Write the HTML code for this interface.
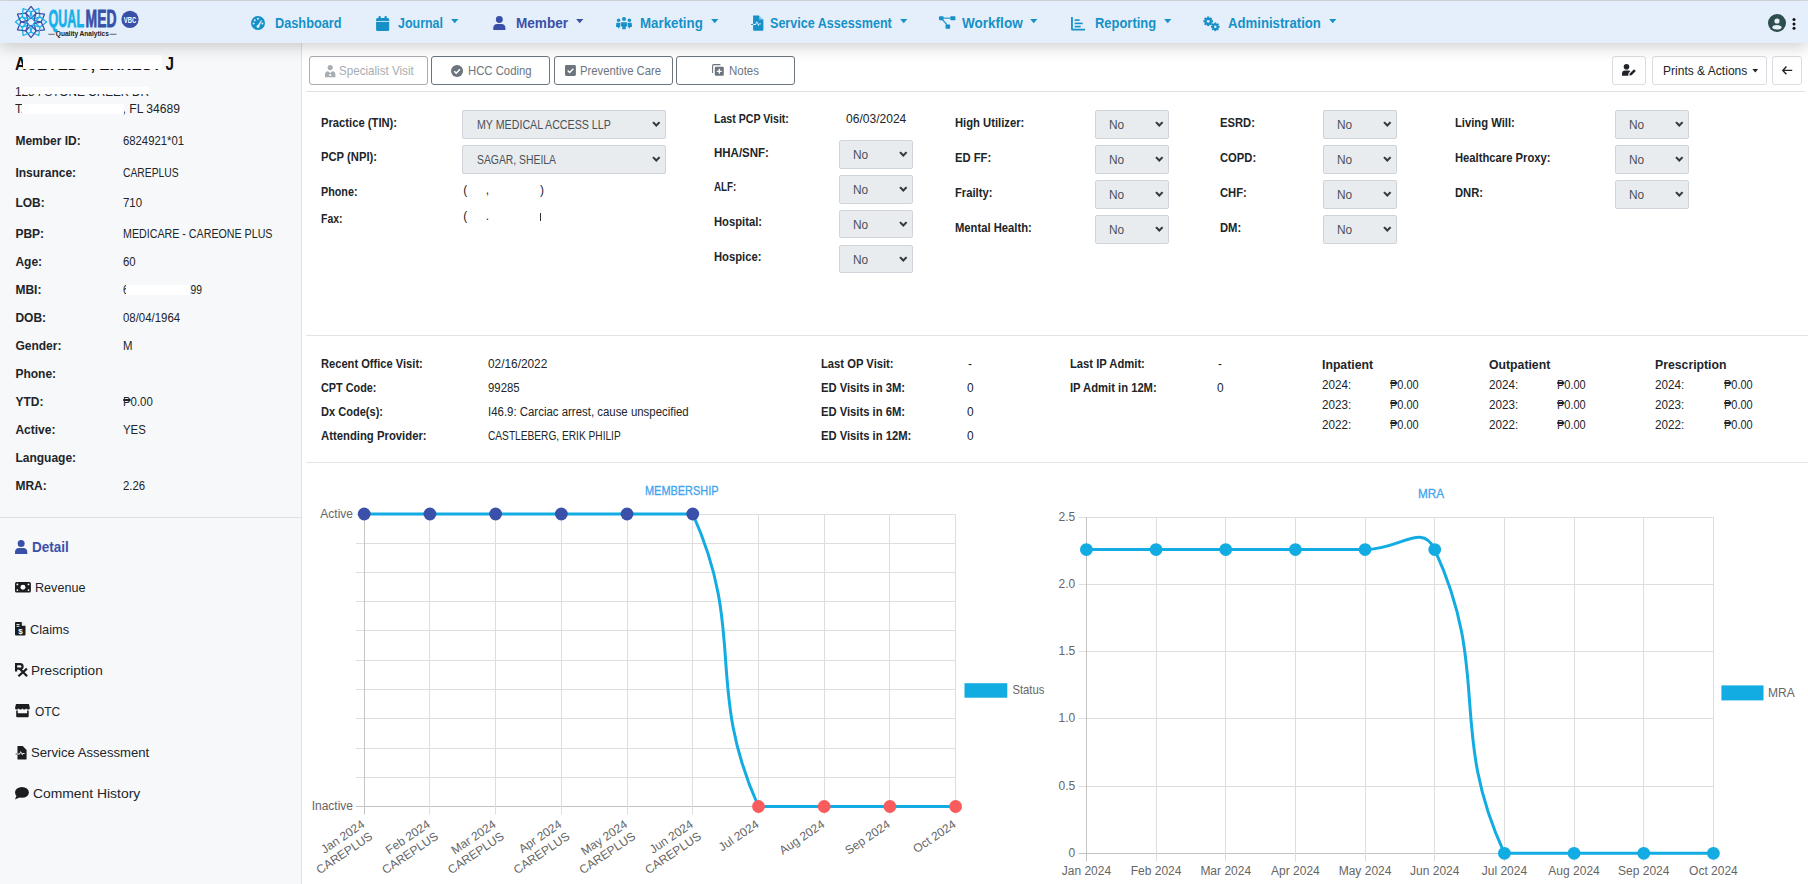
<!DOCTYPE html>
<html><head><meta charset="utf-8"><title>QualMed</title>
<style>
html,body{margin:0;padding:0;}
body{width:1808px;height:884px;overflow:hidden;position:relative;background:#fff;font-family:"Liberation Sans",sans-serif;}
.t{position:absolute;white-space:nowrap;transform-origin:0 0;}
svg{overflow:visible;}
</style></head><body>
<div style="position:absolute;left:0.00px;top:0.00px;width:1808.00px;height:1.00px;background:#d9dde2"></div>
<div style="position:absolute;left:0.00px;top:1.00px;width:1808.00px;height:42.00px;background:#e5effb;box-shadow:0 4px 16px rgba(0,0,0,0.19);z-index:5"></div>
<svg style="position:absolute;left:14.50px;top:5.70px;z-index:6" width="32.00" height="32.00" viewBox="0 0 32 32"><path transform="rotate(0 16 16)" d="M16 12.6 L21.2 7.2 L16 0.4 L10.8 7.2 Z" fill="none" stroke="#3a50a8" stroke-width="1.3" stroke-linejoin="round"/><path transform="rotate(30 16 16)" d="M16 12.6 L21.2 7.2 L16 0.4 L10.8 7.2 Z" fill="none" stroke="#1ab3ea" stroke-width="1.3" stroke-linejoin="round"/><path transform="rotate(60 16 16)" d="M16 12.6 L21.2 7.2 L16 0.4 L10.8 7.2 Z" fill="none" stroke="#3a50a8" stroke-width="1.3" stroke-linejoin="round"/><path transform="rotate(90 16 16)" d="M16 12.6 L21.2 7.2 L16 0.4 L10.8 7.2 Z" fill="none" stroke="#1ab3ea" stroke-width="1.3" stroke-linejoin="round"/><path transform="rotate(120 16 16)" d="M16 12.6 L21.2 7.2 L16 0.4 L10.8 7.2 Z" fill="none" stroke="#3a50a8" stroke-width="1.3" stroke-linejoin="round"/><path transform="rotate(150 16 16)" d="M16 12.6 L21.2 7.2 L16 0.4 L10.8 7.2 Z" fill="none" stroke="#1ab3ea" stroke-width="1.3" stroke-linejoin="round"/><path transform="rotate(180 16 16)" d="M16 12.6 L21.2 7.2 L16 0.4 L10.8 7.2 Z" fill="none" stroke="#3a50a8" stroke-width="1.3" stroke-linejoin="round"/><path transform="rotate(210 16 16)" d="M16 12.6 L21.2 7.2 L16 0.4 L10.8 7.2 Z" fill="none" stroke="#1ab3ea" stroke-width="1.3" stroke-linejoin="round"/><path transform="rotate(240 16 16)" d="M16 12.6 L21.2 7.2 L16 0.4 L10.8 7.2 Z" fill="none" stroke="#3a50a8" stroke-width="1.3" stroke-linejoin="round"/><path transform="rotate(270 16 16)" d="M16 12.6 L21.2 7.2 L16 0.4 L10.8 7.2 Z" fill="none" stroke="#1ab3ea" stroke-width="1.3" stroke-linejoin="round"/><path transform="rotate(300 16 16)" d="M16 12.6 L21.2 7.2 L16 0.4 L10.8 7.2 Z" fill="none" stroke="#3a50a8" stroke-width="1.3" stroke-linejoin="round"/><path transform="rotate(330 16 16)" d="M16 12.6 L21.2 7.2 L16 0.4 L10.8 7.2 Z" fill="none" stroke="#1ab3ea" stroke-width="1.3" stroke-linejoin="round"/></svg>
<svg style="position:absolute;left:0;top:0;z-index:6" width="160" height="43" viewBox="0 0 160 43"><text x="48.4" y="27.3" font-family="Liberation Sans" font-weight="bold" font-size="23.2" textLength="35.7" lengthAdjust="spacingAndGlyphs" fill="#19b1ea" stroke="#19b1ea" stroke-width="0.8">QUAL</text><text x="85.6" y="27.3" font-family="Liberation Sans" font-weight="bold" font-size="23.2" textLength="30.9" lengthAdjust="spacingAndGlyphs" fill="#3a50a8" stroke="#3a50a8" stroke-width="0.8">MED</text><circle cx="130" cy="19.4" r="8.6" fill="#3a50a8"/><text x="123.8" y="22.8" font-family="Liberation Sans" font-weight="bold" font-size="9.6" textLength="12.5" lengthAdjust="spacingAndGlyphs" fill="#fff">VBC</text><rect x="48.3" y="33.8" width="6.3" height="0.9" fill="#555"/><rect x="109.8" y="33.8" width="6.7" height="0.9" fill="#555"/><text x="55.8" y="35.9" font-family="Liberation Sans" font-weight="bold" font-size="6.6" textLength="53" lengthAdjust="spacingAndGlyphs" fill="#1a1a1a">Quality Analytics</text></svg>
<div class="t" style="left:274.50px;top:16.15px;font-size:14px;line-height:14px;color:#1591c8;font-weight:bold;transform:scaleX(0.9094);z-index:6;">Dashboard</div>
<div class="t" style="left:398.00px;top:16.15px;font-size:14px;line-height:14px;color:#1591c8;font-weight:bold;transform:scaleX(0.8899);z-index:6;">Journal</div>
<svg style="position:absolute;left:451.00px;top:19.30px;z-index:6" width="7.50" height="4.50" viewBox="0 0 8 5"><path d="M0 0H8L4 4.8Z" fill="#1591c8"/></svg>
<div class="t" style="left:515.70px;top:16.15px;font-size:14px;line-height:14px;color:#3a50a8;font-weight:bold;transform:scaleX(0.9705);z-index:6;">Member</div>
<svg style="position:absolute;left:575.70px;top:19.30px;z-index:6" width="7.50" height="4.50" viewBox="0 0 8 5"><path d="M0 0H8L4 4.8Z" fill="#3a50a8"/></svg>
<div class="t" style="left:640.40px;top:16.15px;font-size:14px;line-height:14px;color:#1591c8;font-weight:bold;transform:scaleX(0.9497);z-index:6;">Marketing</div>
<svg style="position:absolute;left:711.30px;top:19.30px;z-index:6" width="7.50" height="4.50" viewBox="0 0 8 5"><path d="M0 0H8L4 4.8Z" fill="#1591c8"/></svg>
<div class="t" style="left:770.40px;top:16.15px;font-size:14px;line-height:14px;color:#1591c8;font-weight:bold;transform:scaleX(0.8977);z-index:6;">Service Assessment</div>
<svg style="position:absolute;left:900.20px;top:19.30px;z-index:6" width="7.50" height="4.50" viewBox="0 0 8 5"><path d="M0 0H8L4 4.8Z" fill="#1591c8"/></svg>
<div class="t" style="left:962.10px;top:16.15px;font-size:14px;line-height:14px;color:#1591c8;font-weight:bold;transform:scaleX(0.9674);z-index:6;">Workflow</div>
<svg style="position:absolute;left:1030.30px;top:19.30px;z-index:6" width="7.50" height="4.50" viewBox="0 0 8 5"><path d="M0 0H8L4 4.8Z" fill="#1591c8"/></svg>
<div class="t" style="left:1094.50px;top:16.15px;font-size:14px;line-height:14px;color:#1591c8;font-weight:bold;transform:scaleX(0.9243);z-index:6;">Reporting</div>
<svg style="position:absolute;left:1164.40px;top:19.30px;z-index:6" width="7.50" height="4.50" viewBox="0 0 8 5"><path d="M0 0H8L4 4.8Z" fill="#1591c8"/></svg>
<div class="t" style="left:1228.10px;top:16.15px;font-size:14px;line-height:14px;color:#1591c8;font-weight:bold;transform:scaleX(0.9404);z-index:6;">Administration</div>
<svg style="position:absolute;left:1329.40px;top:19.30px;z-index:6" width="7.50" height="4.50" viewBox="0 0 8 5"><path d="M0 0H8L4 4.8Z" fill="#1591c8"/></svg>
<svg style="position:absolute;left:251.30px;top:16.00px;z-index:6" width="14.00" height="14.00" viewBox="0 0 16 16"><circle cx="8" cy="8" r="8" fill="#1591c8"/><circle cx="8" cy="3.2" r="1.1" fill="#e6f0fb"/><circle cx="4.3" cy="4.9" r="1.1" fill="#e6f0fb"/><circle cx="3" cy="8.6" r="1.1" fill="#e6f0fb"/><circle cx="13" cy="8.6" r="1.1" fill="#e6f0fb"/><path d="M7 11.8 L11.6 4.6 L12.4 5.2 L9.2 12.6 Z" fill="#e6f0fb"/><circle cx="8" cy="12" r="1.6" fill="#e6f0fb"/></svg>
<svg style="position:absolute;left:375.70px;top:15.50px;z-index:6" width="13.30" height="15.00" viewBox="0 0 14 16"><rect x="0" y="2.2" width="14" height="13.8" rx="1.6" fill="#1591c8"/><rect x="2.6" y="0" width="2.4" height="4" rx="1" fill="#1591c8"/><rect x="9" y="0" width="2.4" height="4" rx="1" fill="#1591c8"/><rect x="0" y="5.3" width="14" height="0.9" fill="#e6f0fb"/></svg>
<svg style="position:absolute;left:493.00px;top:15.80px;z-index:6" width="12.70" height="13.90" viewBox="0 0 14 16"><circle cx="7" cy="4" r="4" fill="#3a50a8"/><path d="M0 16 V13.6 C0 10.8 2 9.2 4.4 9.2 H9.6 C12 9.2 14 10.8 14 13.6 V16 Z" fill="#3a50a8"/></svg>
<svg style="position:absolute;left:615.00px;top:16.50px;z-index:6" width="18.00" height="12.20" viewBox="0 0 20 14"><circle cx="10" cy="2.3" r="2.3" fill="#1591c8"/><circle cx="3.8" cy="3.6" r="2" fill="#1591c8"/><circle cx="16.2" cy="3.6" r="2" fill="#1591c8"/><path d="M6.8 6 H13.2 L13.6 10.5 L12 11 V14 H8 V11 L6.4 10.5 Z" fill="#1591c8"/><path d="M1.2 6.6 H6 L5.6 11.5 H4.6 V13 H3 V11.5 H0.8 Z" fill="#1591c8"/><path d="M14 6.6 H18.8 L19.2 11.5 H17 V13 H15.4 V11.5 H14.4 Z" fill="#1591c8"/></svg>
<svg style="position:absolute;left:751.00px;top:14.50px;z-index:6" width="12.40" height="16.00" viewBox="0 0 13 16"><path d="M2.2 0 H8.4 L13 4.6 V15 Q13 16 12 16 H3.2 Q2.2 16 2.2 15 V10 H5 L6.2 7.8 L7.8 11.4 L8.8 9.4 H10.6 V8.4 H8.2 L7.8 9.2 L6.2 5.8 L4.4 9 H2.2 Z" fill="#1591c8"/><path d="M8.6 0 V4.4 H13 Z" fill="#e6f0fb" opacity="0.6"/><path d="M0 9 H2.2 V10 H0 Z" fill="#1591c8"/></svg>
<svg style="position:absolute;left:938.60px;top:16.30px;z-index:6" width="16.40" height="13.00" viewBox="0 0 18 14"><rect x="0" y="0" width="5" height="4.4" rx="0.8" fill="#1591c8"/><rect x="12.5" y="0" width="5.5" height="4.4" rx="0.8" fill="#1591c8"/><rect x="7.2" y="9.2" width="5" height="4.8" rx="0.8" fill="#1591c8"/><path d="M4 1.6 H13 V2.8 H4 Z" fill="#1591c8"/><path d="M2.8 3.8 L8.4 10 L9.4 9.2 L3.8 3 Z" fill="#1591c8"/></svg>
<svg style="position:absolute;left:1071.00px;top:16.50px;z-index:6" width="14.10" height="13.50" viewBox="0 0 14 13.5"><path d="M0 0 H1.8 V11.7 H14 V13.5 H1.5 Q0 13.5 0 12 Z" fill="#1591c8"/><rect x="3.6" y="2.3" width="5" height="1.6" fill="#1591c8"/><rect x="3.6" y="5.6" width="8" height="1.6" fill="#1591c8"/><rect x="3.6" y="8.8" width="6" height="1.6" fill="#1591c8"/></svg>
<svg style="position:absolute;left:1203.40px;top:15.50px;z-index:6" width="17.30" height="15.00" viewBox="0 0 17.3 15"><rect x="4.10" y="0.50" width="2.20" height="2.40" fill="#1591c8" transform="rotate(0.0 5.2 5.3)"/><rect x="4.10" y="0.50" width="2.20" height="2.40" fill="#1591c8" transform="rotate(45.0 5.2 5.3)"/><rect x="4.10" y="0.50" width="2.20" height="2.40" fill="#1591c8" transform="rotate(90.0 5.2 5.3)"/><rect x="4.10" y="0.50" width="2.20" height="2.40" fill="#1591c8" transform="rotate(135.0 5.2 5.3)"/><rect x="4.10" y="0.50" width="2.20" height="2.40" fill="#1591c8" transform="rotate(180.0 5.2 5.3)"/><rect x="4.10" y="0.50" width="2.20" height="2.40" fill="#1591c8" transform="rotate(225.0 5.2 5.3)"/><rect x="4.10" y="0.50" width="2.20" height="2.40" fill="#1591c8" transform="rotate(270.0 5.2 5.3)"/><rect x="4.10" y="0.50" width="2.20" height="2.40" fill="#1591c8" transform="rotate(315.0 5.2 5.3)"/><circle cx="5.2" cy="5.3" r="3.6" fill="#1591c8"/><circle cx="5.2" cy="5.3" r="1.4" fill="#e6f0fb"/><rect x="11.30" y="6.50" width="2.00" height="2.40" fill="#1591c8" transform="rotate(0.0 12.3 10.8)"/><rect x="11.30" y="6.50" width="2.00" height="2.40" fill="#1591c8" transform="rotate(45.0 12.3 10.8)"/><rect x="11.30" y="6.50" width="2.00" height="2.40" fill="#1591c8" transform="rotate(90.0 12.3 10.8)"/><rect x="11.30" y="6.50" width="2.00" height="2.40" fill="#1591c8" transform="rotate(135.0 12.3 10.8)"/><rect x="11.30" y="6.50" width="2.00" height="2.40" fill="#1591c8" transform="rotate(180.0 12.3 10.8)"/><rect x="11.30" y="6.50" width="2.00" height="2.40" fill="#1591c8" transform="rotate(225.0 12.3 10.8)"/><rect x="11.30" y="6.50" width="2.00" height="2.40" fill="#1591c8" transform="rotate(270.0 12.3 10.8)"/><rect x="11.30" y="6.50" width="2.00" height="2.40" fill="#1591c8" transform="rotate(315.0 12.3 10.8)"/><circle cx="12.3" cy="10.8" r="3.1" fill="#1591c8"/><circle cx="12.3" cy="10.8" r="1.2" fill="#e6f0fb"/></svg>
<svg style="position:absolute;left:1768.00px;top:14.00px;z-index:6" width="18.00" height="18.00" viewBox="0 0 18 18"><circle cx="9" cy="9" r="9" fill="#2e4d4f"/><circle cx="9" cy="7" r="2.6" fill="#e6f0fb"/><ellipse cx="9" cy="13.3" rx="4.6" ry="2.2" fill="#e6f0fb"/></svg>
<svg style="position:absolute;left:1792.00px;top:18.00px;z-index:6" width="4.00" height="12.00" viewBox="0 0 4 12"><circle cx="2" cy="1.6" r="1.5" fill="#111"/><circle cx="2" cy="5.9" r="1.5" fill="#111"/><circle cx="2" cy="10.2" r="1.5" fill="#111"/></svg>
<div style="position:absolute;left:0.00px;top:43.00px;width:301.00px;height:841.00px;background:#f7f8fa;border-right:1px solid #dee2e6"></div>
<div class="t" style="left:15.00px;top:54.76px;font-size:18px;line-height:18px;color:#111;font-weight:bold;transform:scaleX(0.8501);">ACEVEDO, ERNEST J</div>
<div style="position:absolute;left:22.60px;top:55.00px;width:139.40px;height:13.80px;background:#fff"></div>
<div class="t" style="left:15.00px;top:85.84px;font-size:12px;line-height:12px;color:#212529;transform:scaleX(0.9817);">1234 STONE CREEK DR</div>
<div style="position:absolute;left:21.00px;top:86.60px;width:128.00px;height:7.70px;background:#fff"></div>
<div class="t" style="left:15.00px;top:103.02px;font-size:12.5px;line-height:12.5px;color:#212529;transform:scaleX(0.9694);">TARPON SPRINGS, FL 34689</div>
<div style="position:absolute;left:22.00px;top:104.40px;width:101.50px;height:9.20px;background:#fff"></div>
<div class="t" style="left:15.40px;top:135.34px;font-size:12px;line-height:12px;color:#212529;font-weight:bold;">Member ID:</div>
<div class="t" style="left:122.50px;top:135.34px;font-size:12px;line-height:12px;color:#212529;transform:scaleX(0.9423);">6824921*01</div>
<div class="t" style="left:15.40px;top:166.54px;font-size:12px;line-height:12px;color:#212529;font-weight:bold;">Insurance:</div>
<div class="t" style="left:122.50px;top:166.54px;font-size:12px;line-height:12px;color:#212529;transform:scaleX(0.8600);">CAREPLUS</div>
<div class="t" style="left:15.40px;top:197.34px;font-size:12px;line-height:12px;color:#212529;font-weight:bold;">LOB:</div>
<div class="t" style="left:122.50px;top:197.34px;font-size:12px;line-height:12px;color:#212529;transform:scaleX(0.9500);">710</div>
<div class="t" style="left:15.40px;top:228.04px;font-size:12px;line-height:12px;color:#212529;font-weight:bold;">PBP:</div>
<div class="t" style="left:122.50px;top:228.04px;font-size:12px;line-height:12px;color:#212529;transform:scaleX(0.8897);">MEDICARE - CAREONE PLUS</div>
<div class="t" style="left:15.40px;top:255.94px;font-size:12px;line-height:12px;color:#212529;font-weight:bold;">Age:</div>
<div class="t" style="left:122.50px;top:255.94px;font-size:12px;line-height:12px;color:#212529;transform:scaleX(0.9500);">60</div>
<div class="t" style="left:15.40px;top:283.84px;font-size:12px;line-height:12px;color:#212529;font-weight:bold;">MBI:</div>
<div class="t" style="left:122.50px;top:283.84px;font-size:12px;line-height:12px;color:#212529;transform:scaleX(0.8582);">6XXXXXXXXX99</div>
<div class="t" style="left:15.40px;top:311.84px;font-size:12px;line-height:12px;color:#212529;font-weight:bold;">DOB:</div>
<div class="t" style="left:122.50px;top:311.84px;font-size:12px;line-height:12px;color:#212529;transform:scaleX(0.9500);">08/04/1964</div>
<div class="t" style="left:15.40px;top:339.84px;font-size:12px;line-height:12px;color:#212529;font-weight:bold;">Gender:</div>
<div class="t" style="left:122.50px;top:339.84px;font-size:12px;line-height:12px;color:#212529;transform:scaleX(0.9500);">M</div>
<div class="t" style="left:15.40px;top:367.84px;font-size:12px;line-height:12px;color:#212529;font-weight:bold;">Phone:</div>
<div class="t" style="left:15.40px;top:395.84px;font-size:12px;line-height:12px;color:#212529;font-weight:bold;">YTD:</div>
<div class="t" style="left:122.50px;top:395.84px;font-size:12px;line-height:12px;color:#212529;transform:scaleX(0.9500);">₱0.00</div>
<div class="t" style="left:15.40px;top:423.84px;font-size:12px;line-height:12px;color:#212529;font-weight:bold;">Active:</div>
<div class="t" style="left:122.50px;top:423.84px;font-size:12px;line-height:12px;color:#212529;transform:scaleX(0.9500);">YES</div>
<div class="t" style="left:15.40px;top:451.84px;font-size:12px;line-height:12px;color:#212529;font-weight:bold;">Language:</div>
<div class="t" style="left:15.40px;top:479.94px;font-size:12px;line-height:12px;color:#212529;font-weight:bold;">MRA:</div>
<div class="t" style="left:122.50px;top:479.94px;font-size:12px;line-height:12px;color:#212529;transform:scaleX(0.9500);">2.26</div>
<div style="position:absolute;left:125.60px;top:284.50px;width:64.00px;height:10.20px;background:#fff"></div>
<div style="position:absolute;left:0.00px;top:517.00px;width:301.00px;height:1.00px;background:#dee2e6"></div>
<svg style="position:absolute;left:15.00px;top:539.70px;" width="12.30" height="14.00" viewBox="0 0 14 16"><circle cx="7" cy="4" r="4" fill="#3a50a8"/><path d="M0 16 V13.6 C0 10.8 2 9.2 4.4 9.2 H9.6 C12 9.2 14 10.8 14 13.6 V16 Z" fill="#3a50a8"/></svg>
<div class="t" style="left:31.70px;top:540.15px;font-size:14px;line-height:14px;color:#3a50a8;font-weight:bold;transform:scaleX(0.9652);">Detail</div>
<svg style="position:absolute;left:15.00px;top:582.30px;" width="15.90" height="10.50" viewBox="0 0 16 10.5"><rect x="0" y="0" width="16" height="10.5" rx="1.6" fill="#1b1e21"/><circle cx="8" cy="5.25" r="2.5" fill="#fff"/><circle cx="2.4" cy="2.4" r="0.9" fill="#fff"/><circle cx="13.6" cy="2.4" r="0.9" fill="#fff"/><circle cx="2.4" cy="8.1" r="0.9" fill="#fff"/><circle cx="13.6" cy="8.1" r="0.9" fill="#fff"/></svg>
<div class="t" style="left:35.20px;top:581.37px;font-size:13.5px;line-height:13.5px;color:#212529;transform:scaleX(0.9326);">Revenue</div>
<svg style="position:absolute;left:15.00px;top:621.90px;" width="10.50" height="13.50" viewBox="0 0 10.5 13.5"><path d="M0 1 Q0 0 1 0 H6.6 L10.5 3.9 V12.5 Q10.5 13.5 9.5 13.5 H1 Q0 13.5 0 12.5 Z" fill="#1b1e21"/><path d="M6.8 0 V3.7 H10.5" fill="#f7f8fa"/><text x="5.4" y="11.6" font-family="Liberation Sans" font-weight="bold" font-size="8" fill="#fff" text-anchor="middle">$</text><rect x="1.5" y="2" width="3" height="0.9" fill="#fff"/><rect x="1.5" y="3.8" width="3" height="0.9" fill="#fff"/></svg>
<div class="t" style="left:29.50px;top:622.67px;font-size:13.5px;line-height:13.5px;color:#212529;transform:scaleX(0.9478);">Claims</div>
<svg style="position:absolute;left:14.80px;top:662.80px;" width="12.50" height="13.50" viewBox="0 0 12.5 13.5"><path d="M1.1 8.6 V1.1 H4.9 Q7.6 1.1 7.6 3.4 Q7.6 5.7 4.9 5.7 H1.1 M5 5.9 L12.1 13.2 M3.4 13.2 L11.9 5.6" fill="none" stroke="#1b1e21" stroke-width="2.2"/></svg>
<div class="t" style="left:31.20px;top:664.07px;font-size:13.5px;line-height:13.5px;color:#212529;transform:scaleX(1.0059);">Prescription</div>
<svg style="position:absolute;left:15.00px;top:704.40px;" width="14.90" height="13.20" viewBox="0 0 15 13.2"><path d="M1 0 H14 L15 4 Q15 5.6 13.2 5.6 Q11.3 5.6 11.2 4.2 Q11 5.6 9.4 5.6 Q7.6 5.6 7.5 4.2 Q7.4 5.6 5.6 5.6 Q3.9 5.6 3.8 4.2 Q3.6 5.6 1.8 5.6 Q0 5.6 0 4 Z" fill="#1b1e21"/><path d="M1.2 6.6 H2.8 V9.2 H12.2 V6.6 H13.8 V12.2 Q13.8 13.2 12.8 13.2 H2.2 Q1.2 13.2 1.2 12.2 Z" fill="#1b1e21"/></svg>
<div class="t" style="left:34.60px;top:704.87px;font-size:13.5px;line-height:13.5px;color:#212529;transform:scaleX(0.8843);">OTC</div>
<svg style="position:absolute;left:15.00px;top:745.50px;" width="12.20" height="13.50" viewBox="0 0 13 16"><path d="M2.2 0 H8.4 L13 4.6 V15 Q13 16 12 16 H3.2 Q2.2 16 2.2 15 V10 H5 L6.2 7.8 L7.8 11.4 L8.8 9.4 H10.6 V8.4 H8.2 L7.8 9.2 L6.2 5.8 L4.4 9 H2.2 Z" fill="#1b1e21"/><path d="M0 9 H2.2 V10 H0 Z" fill="#1b1e21"/></svg>
<div class="t" style="left:31.20px;top:746.27px;font-size:13.5px;line-height:13.5px;color:#212529;transform:scaleX(0.9725);">Service Assessment</div>
<svg style="position:absolute;left:15.00px;top:786.50px;" width="13.90" height="12.50" viewBox="0 0 14 12.5"><ellipse cx="7" cy="5.4" rx="7" ry="5.4" fill="#1b1e21"/><path d="M1.6 8.6 L0 12.5 L4.8 10.4 Z" fill="#1b1e21"/></svg>
<div class="t" style="left:33.00px;top:786.97px;font-size:13.5px;line-height:13.5px;color:#212529;transform:scaleX(1.0281);">Comment History</div>
<div style="position:absolute;left:309.00px;top:56.00px;width:119.00px;height:28.80px;box-sizing:border-box;border:1px solid #a7adb2;border-radius:3px;"></div>
<div style="position:absolute;left:431.00px;top:56.00px;width:119.00px;height:28.80px;box-sizing:border-box;border:1px solid #6c757d;border-radius:3px;"></div>
<div style="position:absolute;left:554.00px;top:56.00px;width:118.50px;height:28.80px;box-sizing:border-box;border:1px solid #6c757d;border-radius:3px;"></div>
<div style="position:absolute;left:676.00px;top:56.00px;width:119.00px;height:28.80px;box-sizing:border-box;border:1px solid #6c757d;border-radius:3px;"></div>
<svg style="position:absolute;left:324.80px;top:64.50px;" width="10.40" height="12.30" viewBox="0 0 10.4 12.3"><circle cx="5.2" cy="2.6" r="2.6" fill="#a7adb1"/><path d="M0 12.3 V9.6 Q0 6.4 3 6.2 L5.2 8 L7.4 6.2 Q10.4 6.4 10.4 9.6 V12.3 Z" fill="#a7adb1"/><circle cx="5.2" cy="10" r="1.1" fill="#fff"/></svg>
<div class="t" style="left:338.80px;top:63.90px;font-size:13px;line-height:13px;color:#a7adb1;transform:scaleX(0.8938);">Specialist Visit</div>
<svg style="position:absolute;left:451.30px;top:64.50px;" width="12.10" height="12.10" viewBox="0 0 12 12"><circle cx="6" cy="6" r="6" fill="#6c757d"/><path d="M3.2 6.2 L5.2 8.1 L8.9 4.3" fill="none" stroke="#fff" stroke-width="1.5"/></svg>
<div class="t" style="left:467.60px;top:63.90px;font-size:13px;line-height:13px;color:#6c757d;transform:scaleX(0.8715);">HCC Coding</div>
<svg style="position:absolute;left:565.20px;top:65.00px;" width="10.90" height="10.90" viewBox="0 0 11 11"><rect x="0" y="0" width="11" height="11" rx="1.4" fill="#6c757d"/><path d="M2.7 5.6 L4.7 7.5 L8.4 3.7" fill="none" stroke="#fff" stroke-width="1.4"/></svg>
<div class="t" style="left:580.40px;top:63.90px;font-size:13px;line-height:13px;color:#6c757d;transform:scaleX(0.8701);">Preventive Care</div>
<svg style="position:absolute;left:712.00px;top:64.30px;" width="12.00" height="12.00" viewBox="0 0 12 12"><path d="M0.6 9 V1.6 Q0.6 0.6 1.6 0.6 H8.4" fill="none" stroke="#6c757d" stroke-width="1.1"/><rect x="2.8" y="2.8" width="9" height="9" rx="1.2" fill="#6c757d"/><path d="M7.3 4.8 V9.8 M4.8 7.3 H9.8" stroke="#fff" stroke-width="1.3"/></svg>
<div class="t" style="left:729.00px;top:63.90px;font-size:13px;line-height:13px;color:#6c757d;transform:scaleX(0.8834);">Notes</div>
<div style="position:absolute;left:1612.30px;top:56.00px;width:33.40px;height:28.80px;box-sizing:border-box;border:1px solid #dadde1;border-radius:3px"></div>
<div style="position:absolute;left:1652.40px;top:56.00px;width:115.00px;height:28.80px;box-sizing:border-box;border:1px solid #dadde1;border-radius:3px"></div>
<div style="position:absolute;left:1772.40px;top:56.00px;width:29.20px;height:28.80px;box-sizing:border-box;border:1px solid #dadde1;border-radius:3px"></div>
<svg style="position:absolute;left:1621.90px;top:64.40px;" width="14.00" height="11.80" viewBox="0 0 14 11.8"><circle cx="4.5" cy="2.8" r="2.8" fill="#212529"/><path d="M0 11.8 V10 Q0 6.6 3 6.6 H6.5 Q7.8 6.6 8.4 7.2 L6.6 9 L6.2 11.8 Z" fill="#212529"/><path d="M7.4 11.6 L7.8 9.4 L12 5.2 L13.8 7 L9.6 11.2 Z" fill="#212529"/></svg>
<div class="t" style="left:1662.70px;top:63.90px;font-size:13px;line-height:13px;color:#212529;transform:scaleX(0.9260);">Prints &amp; Actions</div>
<svg style="position:absolute;left:1752.00px;top:68.80px;" width="6.50" height="3.60" viewBox="0 0 8 5"><path d="M0 0H8L4 4.8Z" fill="#212529"/></svg>
<svg style="position:absolute;left:1781.80px;top:66.00px;" width="10.50" height="8.80" viewBox="0 0 10.5 8.8"><path d="M4.4 0.6 L0.8 4.4 L4.4 8.2 M0.8 4.4 H10.2" fill="none" stroke="#212529" stroke-width="1.4"/></svg>
<div style="position:absolute;left:306.00px;top:91.00px;width:1499.00px;height:1.00px;background:#dee2e6"></div>
<div class="t" style="left:321.40px;top:116.72px;font-size:12.5px;line-height:12.5px;color:#212529;font-weight:bold;transform:scaleX(0.8980);">Practice (TIN):</div>
<div class="t" style="left:321.40px;top:151.22px;font-size:12.5px;line-height:12.5px;color:#212529;font-weight:bold;transform:scaleX(0.8992);">PCP (NPI):</div>
<div class="t" style="left:321.40px;top:185.72px;font-size:12.5px;line-height:12.5px;color:#212529;font-weight:bold;transform:scaleX(0.8617);">Phone:</div>
<div class="t" style="left:321.40px;top:213.02px;font-size:12.5px;line-height:12.5px;color:#212529;font-weight:bold;transform:scaleX(0.8365);">Fax:</div>
<div style="position:absolute;left:462.00px;top:110.30px;width:204.00px;height:28.40px;box-sizing:border-box;background:#e9ecef;border:1px solid #ced4da;border-radius:2px"></div>
<div class="t" style="left:477.00px;top:118.92px;font-size:12.5px;line-height:12.5px;color:#495057;transform:scaleX(0.8522);">MY MEDICAL ACCESS LLP</div>
<svg style="position:absolute;left:652.00px;top:121.10px;" width="8.60" height="6.40" viewBox="0 0 8.6 6.4"><path d="M1 1.1 L4.3 4.6 L7.6 1.1" fill="none" stroke="#343a40" stroke-width="2.1"/></svg>
<div style="position:absolute;left:462.00px;top:145.20px;width:204.00px;height:28.40px;box-sizing:border-box;background:#e9ecef;border:1px solid #ced4da;border-radius:2px"></div>
<div class="t" style="left:477.00px;top:153.82px;font-size:12.5px;line-height:12.5px;color:#495057;transform:scaleX(0.8301);">SAGAR, SHEILA</div>
<svg style="position:absolute;left:652.00px;top:156.00px;" width="8.60" height="6.40" viewBox="0 0 8.6 6.4"><path d="M1 1.1 L4.3 4.6 L7.6 1.1" fill="none" stroke="#343a40" stroke-width="2.1"/></svg>
<div class="t" style="left:463.30px;top:183.84px;font-size:12px;line-height:12px;color:#212529;">(</div>
<div class="t" style="left:485.80px;top:183.84px;font-size:12px;line-height:12px;color:#212529;">,</div>
<div class="t" style="left:540.00px;top:183.84px;font-size:12px;line-height:12px;color:#212529;">)</div>
<div class="t" style="left:463.30px;top:210.44px;font-size:12px;line-height:12px;color:#212529;">(</div>
<div class="t" style="left:485.80px;top:210.44px;font-size:12px;line-height:12px;color:#212529;">.</div>
<div style="position:absolute;left:540.20px;top:212.50px;width:1.10px;height:8.20px;background:#333"></div>
<div style="position:absolute;left:467.00px;top:184.00px;width:70.00px;height:8.00px;background:#fff"></div>
<div class="t" style="left:714.10px;top:113.32px;font-size:12.5px;line-height:12.5px;color:#212529;font-weight:bold;transform:scaleX(0.8467);">Last PCP Visit:</div>
<div class="t" style="left:845.50px;top:113.32px;font-size:12.5px;line-height:12.5px;color:#212529;transform:scaleX(0.9638);">06/03/2024</div>
<div class="t" style="left:714.10px;top:146.52px;font-size:12.5px;line-height:12.5px;color:#212529;font-weight:bold;transform:scaleX(0.9193);">HHA/SNF:</div>
<div style="position:absolute;left:839.20px;top:140.30px;width:73.60px;height:28.40px;box-sizing:border-box;background:#e9ecef;border:1px solid #ced4da;border-radius:2px"></div>
<div class="t" style="left:853.20px;top:148.92px;font-size:12.5px;line-height:12.5px;color:#495057;transform:scaleX(0.9500);">No</div>
<svg style="position:absolute;left:898.80px;top:151.10px;" width="8.60" height="6.40" viewBox="0 0 8.6 6.4"><path d="M1 1.1 L4.3 4.6 L7.6 1.1" fill="none" stroke="#343a40" stroke-width="2.1"/></svg>
<div class="t" style="left:714.10px;top:181.42px;font-size:12.5px;line-height:12.5px;color:#212529;font-weight:bold;transform:scaleX(0.7835);">ALF:</div>
<div style="position:absolute;left:839.20px;top:175.20px;width:73.60px;height:28.40px;box-sizing:border-box;background:#e9ecef;border:1px solid #ced4da;border-radius:2px"></div>
<div class="t" style="left:853.20px;top:183.82px;font-size:12.5px;line-height:12.5px;color:#495057;transform:scaleX(0.9500);">No</div>
<svg style="position:absolute;left:898.80px;top:186.00px;" width="8.60" height="6.40" viewBox="0 0 8.6 6.4"><path d="M1 1.1 L4.3 4.6 L7.6 1.1" fill="none" stroke="#343a40" stroke-width="2.1"/></svg>
<div class="t" style="left:714.10px;top:216.32px;font-size:12.5px;line-height:12.5px;color:#212529;font-weight:bold;transform:scaleX(0.8982);">Hospital:</div>
<div style="position:absolute;left:839.20px;top:210.10px;width:73.60px;height:28.40px;box-sizing:border-box;background:#e9ecef;border:1px solid #ced4da;border-radius:2px"></div>
<div class="t" style="left:853.20px;top:218.72px;font-size:12.5px;line-height:12.5px;color:#495057;transform:scaleX(0.9500);">No</div>
<svg style="position:absolute;left:898.80px;top:220.90px;" width="8.60" height="6.40" viewBox="0 0 8.6 6.4"><path d="M1 1.1 L4.3 4.6 L7.6 1.1" fill="none" stroke="#343a40" stroke-width="2.1"/></svg>
<div class="t" style="left:714.10px;top:251.22px;font-size:12.5px;line-height:12.5px;color:#212529;font-weight:bold;transform:scaleX(0.8982);">Hospice:</div>
<div style="position:absolute;left:839.20px;top:245.00px;width:73.60px;height:28.40px;box-sizing:border-box;background:#e9ecef;border:1px solid #ced4da;border-radius:2px"></div>
<div class="t" style="left:853.20px;top:253.62px;font-size:12.5px;line-height:12.5px;color:#495057;transform:scaleX(0.9500);">No</div>
<svg style="position:absolute;left:898.80px;top:255.80px;" width="8.60" height="6.40" viewBox="0 0 8.6 6.4"><path d="M1 1.1 L4.3 4.6 L7.6 1.1" fill="none" stroke="#343a40" stroke-width="2.1"/></svg>
<div class="t" style="left:955.00px;top:116.52px;font-size:12.5px;line-height:12.5px;color:#212529;font-weight:bold;transform:scaleX(0.8982);">High Utilizer:</div>
<div style="position:absolute;left:1095.00px;top:110.20px;width:73.70px;height:28.40px;box-sizing:border-box;background:#e9ecef;border:1px solid #ced4da;border-radius:2px"></div>
<div class="t" style="left:1109.00px;top:118.82px;font-size:12.5px;line-height:12.5px;color:#495057;transform:scaleX(0.9500);">No</div>
<svg style="position:absolute;left:1154.70px;top:121.00px;" width="8.60" height="6.40" viewBox="0 0 8.6 6.4"><path d="M1 1.1 L4.3 4.6 L7.6 1.1" fill="none" stroke="#343a40" stroke-width="2.1"/></svg>
<div class="t" style="left:955.00px;top:151.62px;font-size:12.5px;line-height:12.5px;color:#212529;font-weight:bold;transform:scaleX(0.8982);">ED FF:</div>
<div style="position:absolute;left:1095.00px;top:145.30px;width:73.70px;height:28.40px;box-sizing:border-box;background:#e9ecef;border:1px solid #ced4da;border-radius:2px"></div>
<div class="t" style="left:1109.00px;top:153.92px;font-size:12.5px;line-height:12.5px;color:#495057;transform:scaleX(0.9500);">No</div>
<svg style="position:absolute;left:1154.70px;top:156.10px;" width="8.60" height="6.40" viewBox="0 0 8.6 6.4"><path d="M1 1.1 L4.3 4.6 L7.6 1.1" fill="none" stroke="#343a40" stroke-width="2.1"/></svg>
<div class="t" style="left:955.00px;top:186.62px;font-size:12.5px;line-height:12.5px;color:#212529;font-weight:bold;transform:scaleX(0.8982);">Frailty:</div>
<div style="position:absolute;left:1095.00px;top:180.30px;width:73.70px;height:28.40px;box-sizing:border-box;background:#e9ecef;border:1px solid #ced4da;border-radius:2px"></div>
<div class="t" style="left:1109.00px;top:188.92px;font-size:12.5px;line-height:12.5px;color:#495057;transform:scaleX(0.9500);">No</div>
<svg style="position:absolute;left:1154.70px;top:191.10px;" width="8.60" height="6.40" viewBox="0 0 8.6 6.4"><path d="M1 1.1 L4.3 4.6 L7.6 1.1" fill="none" stroke="#343a40" stroke-width="2.1"/></svg>
<div class="t" style="left:955.00px;top:221.62px;font-size:12.5px;line-height:12.5px;color:#212529;font-weight:bold;transform:scaleX(0.8982);">Mental Health:</div>
<div style="position:absolute;left:1095.00px;top:215.30px;width:73.70px;height:28.40px;box-sizing:border-box;background:#e9ecef;border:1px solid #ced4da;border-radius:2px"></div>
<div class="t" style="left:1109.00px;top:223.92px;font-size:12.5px;line-height:12.5px;color:#495057;transform:scaleX(0.9500);">No</div>
<svg style="position:absolute;left:1154.70px;top:226.10px;" width="8.60" height="6.40" viewBox="0 0 8.6 6.4"><path d="M1 1.1 L4.3 4.6 L7.6 1.1" fill="none" stroke="#343a40" stroke-width="2.1"/></svg>
<div class="t" style="left:1219.50px;top:116.82px;font-size:12.5px;line-height:12.5px;color:#212529;font-weight:bold;transform:scaleX(0.8982);">ESRD:</div>
<div style="position:absolute;left:1323.00px;top:110.20px;width:73.70px;height:28.40px;box-sizing:border-box;background:#e9ecef;border:1px solid #ced4da;border-radius:2px"></div>
<div class="t" style="left:1337.00px;top:118.82px;font-size:12.5px;line-height:12.5px;color:#495057;transform:scaleX(0.9500);">No</div>
<svg style="position:absolute;left:1382.70px;top:121.00px;" width="8.60" height="6.40" viewBox="0 0 8.6 6.4"><path d="M1 1.1 L4.3 4.6 L7.6 1.1" fill="none" stroke="#343a40" stroke-width="2.1"/></svg>
<div class="t" style="left:1219.50px;top:151.92px;font-size:12.5px;line-height:12.5px;color:#212529;font-weight:bold;transform:scaleX(0.8982);">COPD:</div>
<div style="position:absolute;left:1323.00px;top:145.30px;width:73.70px;height:28.40px;box-sizing:border-box;background:#e9ecef;border:1px solid #ced4da;border-radius:2px"></div>
<div class="t" style="left:1337.00px;top:153.92px;font-size:12.5px;line-height:12.5px;color:#495057;transform:scaleX(0.9500);">No</div>
<svg style="position:absolute;left:1382.70px;top:156.10px;" width="8.60" height="6.40" viewBox="0 0 8.6 6.4"><path d="M1 1.1 L4.3 4.6 L7.6 1.1" fill="none" stroke="#343a40" stroke-width="2.1"/></svg>
<div class="t" style="left:1219.50px;top:186.92px;font-size:12.5px;line-height:12.5px;color:#212529;font-weight:bold;transform:scaleX(0.8982);">CHF:</div>
<div style="position:absolute;left:1323.00px;top:180.30px;width:73.70px;height:28.40px;box-sizing:border-box;background:#e9ecef;border:1px solid #ced4da;border-radius:2px"></div>
<div class="t" style="left:1337.00px;top:188.92px;font-size:12.5px;line-height:12.5px;color:#495057;transform:scaleX(0.9500);">No</div>
<svg style="position:absolute;left:1382.70px;top:191.10px;" width="8.60" height="6.40" viewBox="0 0 8.6 6.4"><path d="M1 1.1 L4.3 4.6 L7.6 1.1" fill="none" stroke="#343a40" stroke-width="2.1"/></svg>
<div class="t" style="left:1219.50px;top:221.92px;font-size:12.5px;line-height:12.5px;color:#212529;font-weight:bold;transform:scaleX(0.8982);">DM:</div>
<div style="position:absolute;left:1323.00px;top:215.30px;width:73.70px;height:28.40px;box-sizing:border-box;background:#e9ecef;border:1px solid #ced4da;border-radius:2px"></div>
<div class="t" style="left:1337.00px;top:223.92px;font-size:12.5px;line-height:12.5px;color:#495057;transform:scaleX(0.9500);">No</div>
<svg style="position:absolute;left:1382.70px;top:226.10px;" width="8.60" height="6.40" viewBox="0 0 8.6 6.4"><path d="M1 1.1 L4.3 4.6 L7.6 1.1" fill="none" stroke="#343a40" stroke-width="2.1"/></svg>
<div class="t" style="left:1454.50px;top:116.82px;font-size:12.5px;line-height:12.5px;color:#212529;font-weight:bold;transform:scaleX(0.8982);">Living Will:</div>
<div style="position:absolute;left:1615.00px;top:110.20px;width:73.60px;height:28.40px;box-sizing:border-box;background:#e9ecef;border:1px solid #ced4da;border-radius:2px"></div>
<div class="t" style="left:1629.00px;top:118.82px;font-size:12.5px;line-height:12.5px;color:#495057;transform:scaleX(0.9500);">No</div>
<svg style="position:absolute;left:1674.60px;top:121.00px;" width="8.60" height="6.40" viewBox="0 0 8.6 6.4"><path d="M1 1.1 L4.3 4.6 L7.6 1.1" fill="none" stroke="#343a40" stroke-width="2.1"/></svg>
<div class="t" style="left:1454.50px;top:151.92px;font-size:12.5px;line-height:12.5px;color:#212529;font-weight:bold;transform:scaleX(0.8982);">Healthcare Proxy:</div>
<div style="position:absolute;left:1615.00px;top:145.30px;width:73.60px;height:28.40px;box-sizing:border-box;background:#e9ecef;border:1px solid #ced4da;border-radius:2px"></div>
<div class="t" style="left:1629.00px;top:153.92px;font-size:12.5px;line-height:12.5px;color:#495057;transform:scaleX(0.9500);">No</div>
<svg style="position:absolute;left:1674.60px;top:156.10px;" width="8.60" height="6.40" viewBox="0 0 8.6 6.4"><path d="M1 1.1 L4.3 4.6 L7.6 1.1" fill="none" stroke="#343a40" stroke-width="2.1"/></svg>
<div class="t" style="left:1454.50px;top:186.92px;font-size:12.5px;line-height:12.5px;color:#212529;font-weight:bold;transform:scaleX(0.8982);">DNR:</div>
<div style="position:absolute;left:1615.00px;top:180.30px;width:73.60px;height:28.40px;box-sizing:border-box;background:#e9ecef;border:1px solid #ced4da;border-radius:2px"></div>
<div class="t" style="left:1629.00px;top:188.92px;font-size:12.5px;line-height:12.5px;color:#495057;transform:scaleX(0.9500);">No</div>
<svg style="position:absolute;left:1674.60px;top:191.10px;" width="8.60" height="6.40" viewBox="0 0 8.6 6.4"><path d="M1 1.1 L4.3 4.6 L7.6 1.1" fill="none" stroke="#343a40" stroke-width="2.1"/></svg>
<div style="position:absolute;left:306.00px;top:335.00px;width:1502.00px;height:1.00px;background:#e2e4e6"></div>
<div class="t" style="left:321.00px;top:357.62px;font-size:12.5px;line-height:12.5px;color:#212529;font-weight:bold;transform:scaleX(0.8899);">Recent Office Visit:</div>
<div class="t" style="left:488.00px;top:357.62px;font-size:12.5px;line-height:12.5px;color:#212529;transform:scaleX(0.9478);">02/16/2022</div>
<div class="t" style="left:321.00px;top:381.62px;font-size:12.5px;line-height:12.5px;color:#212529;font-weight:bold;transform:scaleX(0.8672);">CPT Code:</div>
<div class="t" style="left:488.00px;top:381.62px;font-size:12.5px;line-height:12.5px;color:#212529;transform:scaleX(0.9091);">99285</div>
<div class="t" style="left:321.00px;top:405.62px;font-size:12.5px;line-height:12.5px;color:#212529;font-weight:bold;transform:scaleX(0.8839);">Dx Code(s):</div>
<div class="t" style="left:488.00px;top:405.62px;font-size:12.5px;line-height:12.5px;color:#212529;transform:scaleX(0.9141);">I46.9: Carciac arrest, cause unspecified</div>
<div class="t" style="left:321.00px;top:429.62px;font-size:12.5px;line-height:12.5px;color:#212529;font-weight:bold;transform:scaleX(0.9051);">Attending Provider:</div>
<div class="t" style="left:488.00px;top:429.62px;font-size:12.5px;line-height:12.5px;color:#212529;transform:scaleX(0.8129);">CASTLEBERG, ERIK PHILIP</div>
<div class="t" style="left:821.20px;top:357.62px;font-size:12.5px;line-height:12.5px;color:#212529;font-weight:bold;transform:scaleX(0.8982);">Last OP Visit:</div>
<div class="t" style="left:967.50px;top:357.62px;font-size:12.5px;line-height:12.5px;color:#212529;transform:scaleX(0.9500);">-</div>
<div class="t" style="left:821.20px;top:381.62px;font-size:12.5px;line-height:12.5px;color:#212529;font-weight:bold;transform:scaleX(0.8982);">ED Visits in 3M:</div>
<div class="t" style="left:966.50px;top:381.62px;font-size:12.5px;line-height:12.5px;color:#212529;transform:scaleX(0.9500);">0</div>
<div class="t" style="left:821.20px;top:405.62px;font-size:12.5px;line-height:12.5px;color:#212529;font-weight:bold;transform:scaleX(0.8982);">ED Visits in 6M:</div>
<div class="t" style="left:966.50px;top:405.62px;font-size:12.5px;line-height:12.5px;color:#212529;transform:scaleX(0.9500);">0</div>
<div class="t" style="left:821.20px;top:429.62px;font-size:12.5px;line-height:12.5px;color:#212529;font-weight:bold;transform:scaleX(0.8982);">ED Visits in 12M:</div>
<div class="t" style="left:966.50px;top:429.62px;font-size:12.5px;line-height:12.5px;color:#212529;transform:scaleX(0.9500);">0</div>
<div class="t" style="left:1070.00px;top:357.62px;font-size:12.5px;line-height:12.5px;color:#212529;font-weight:bold;transform:scaleX(0.8982);">Last IP Admit:</div>
<div class="t" style="left:1217.70px;top:357.62px;font-size:12.5px;line-height:12.5px;color:#212529;transform:scaleX(0.9500);">-</div>
<div class="t" style="left:1070.00px;top:381.62px;font-size:12.5px;line-height:12.5px;color:#212529;font-weight:bold;transform:scaleX(0.8982);">IP Admit in 12M:</div>
<div class="t" style="left:1216.50px;top:381.62px;font-size:12.5px;line-height:12.5px;color:#212529;transform:scaleX(0.9500);">0</div>
<div class="t" style="left:1322.00px;top:359.02px;font-size:12.5px;line-height:12.5px;color:#212529;font-weight:bold;transform:scaleX(0.9800);">Inpatient</div>
<div class="t" style="left:1322.00px;top:378.92px;font-size:12.5px;line-height:12.5px;color:#212529;transform:scaleX(0.9335);">2024:</div>
<div class="t" style="left:1390.40px;top:378.92px;font-size:12.5px;line-height:12.5px;color:#212529;transform:scaleX(0.8755);">₱0.00</div>
<div class="t" style="left:1322.00px;top:399.02px;font-size:12.5px;line-height:12.5px;color:#212529;transform:scaleX(0.9335);">2023:</div>
<div class="t" style="left:1390.40px;top:399.02px;font-size:12.5px;line-height:12.5px;color:#212529;transform:scaleX(0.8755);">₱0.00</div>
<div class="t" style="left:1322.00px;top:418.92px;font-size:12.5px;line-height:12.5px;color:#212529;transform:scaleX(0.9335);">2022:</div>
<div class="t" style="left:1390.40px;top:418.92px;font-size:12.5px;line-height:12.5px;color:#212529;transform:scaleX(0.8755);">₱0.00</div>
<div class="t" style="left:1488.60px;top:359.02px;font-size:12.5px;line-height:12.5px;color:#212529;font-weight:bold;transform:scaleX(0.9800);">Outpatient</div>
<div class="t" style="left:1488.60px;top:378.92px;font-size:12.5px;line-height:12.5px;color:#212529;transform:scaleX(0.9335);">2024:</div>
<div class="t" style="left:1557.30px;top:378.92px;font-size:12.5px;line-height:12.5px;color:#212529;transform:scaleX(0.8755);">₱0.00</div>
<div class="t" style="left:1488.60px;top:399.02px;font-size:12.5px;line-height:12.5px;color:#212529;transform:scaleX(0.9335);">2023:</div>
<div class="t" style="left:1557.30px;top:399.02px;font-size:12.5px;line-height:12.5px;color:#212529;transform:scaleX(0.8755);">₱0.00</div>
<div class="t" style="left:1488.60px;top:418.92px;font-size:12.5px;line-height:12.5px;color:#212529;transform:scaleX(0.9335);">2022:</div>
<div class="t" style="left:1557.30px;top:418.92px;font-size:12.5px;line-height:12.5px;color:#212529;transform:scaleX(0.8755);">₱0.00</div>
<div class="t" style="left:1654.60px;top:359.02px;font-size:12.5px;line-height:12.5px;color:#212529;font-weight:bold;transform:scaleX(0.9800);">Prescription</div>
<div class="t" style="left:1654.60px;top:378.92px;font-size:12.5px;line-height:12.5px;color:#212529;transform:scaleX(0.9335);">2024:</div>
<div class="t" style="left:1724.20px;top:378.92px;font-size:12.5px;line-height:12.5px;color:#212529;transform:scaleX(0.8755);">₱0.00</div>
<div class="t" style="left:1654.60px;top:399.02px;font-size:12.5px;line-height:12.5px;color:#212529;transform:scaleX(0.9335);">2023:</div>
<div class="t" style="left:1724.20px;top:399.02px;font-size:12.5px;line-height:12.5px;color:#212529;transform:scaleX(0.8755);">₱0.00</div>
<div class="t" style="left:1654.60px;top:418.92px;font-size:12.5px;line-height:12.5px;color:#212529;transform:scaleX(0.9335);">2022:</div>
<div class="t" style="left:1724.20px;top:418.92px;font-size:12.5px;line-height:12.5px;color:#212529;transform:scaleX(0.8755);">₱0.00</div>
<div style="position:absolute;left:306.00px;top:462.00px;width:1502.00px;height:1.00px;background:#e2e4e6"></div>
<svg style="position:absolute;left:0;top:0" width="1808" height="884" viewBox="0 0 1808 884" font-family="Liberation Sans"><line x1="356" y1="514.5" x2="956.0" y2="514.5" stroke="#dedede" stroke-width="1"/><line x1="356" y1="543.5" x2="956.0" y2="543.5" stroke="#dedede" stroke-width="1"/><line x1="356" y1="572.5" x2="956.0" y2="572.5" stroke="#dedede" stroke-width="1"/><line x1="356" y1="601.5" x2="956.0" y2="601.5" stroke="#dedede" stroke-width="1"/><line x1="356" y1="630.5" x2="956.0" y2="630.5" stroke="#dedede" stroke-width="1"/><line x1="356" y1="660.5" x2="956.0" y2="660.5" stroke="#dedede" stroke-width="1"/><line x1="356" y1="689.5" x2="956.0" y2="689.5" stroke="#dedede" stroke-width="1"/><line x1="356" y1="718.5" x2="956.0" y2="718.5" stroke="#dedede" stroke-width="1"/><line x1="356" y1="748.5" x2="956.0" y2="748.5" stroke="#dedede" stroke-width="1"/><line x1="356" y1="777.5" x2="956.0" y2="777.5" stroke="#dedede" stroke-width="1"/><line x1="356" y1="806.5" x2="956.0" y2="806.5" stroke="#c4c4c4" stroke-width="1"/><line x1="364.5" y1="514.0" x2="364.5" y2="814.5" stroke="#c4c4c4" stroke-width="1"/><line x1="429.5" y1="514.0" x2="429.5" y2="814.5" stroke="#dedede" stroke-width="1"/><line x1="495.5" y1="514.0" x2="495.5" y2="814.5" stroke="#dedede" stroke-width="1"/><line x1="561.5" y1="514.0" x2="561.5" y2="814.5" stroke="#dedede" stroke-width="1"/><line x1="627.5" y1="514.0" x2="627.5" y2="814.5" stroke="#dedede" stroke-width="1"/><line x1="692.5" y1="514.0" x2="692.5" y2="814.5" stroke="#dedede" stroke-width="1"/><line x1="758.5" y1="514.0" x2="758.5" y2="814.5" stroke="#dedede" stroke-width="1"/><line x1="824.5" y1="514.0" x2="824.5" y2="814.5" stroke="#dedede" stroke-width="1"/><line x1="889.5" y1="514.0" x2="889.5" y2="814.5" stroke="#dedede" stroke-width="1"/><line x1="955.5" y1="514.0" x2="955.5" y2="814.5" stroke="#dedede" stroke-width="1"/><text x="353" y="517.5" text-anchor="end" font-size="12" fill="#666">Active</text><text x="353" y="809.5" text-anchor="end" font-size="12" fill="#666">Inactive</text><path d="M364.20 514.00 C397.06 514.00 397.06 514.00 429.91 514.00 C462.77 514.00 462.77 514.00 495.62 514.00 C528.48 514.00 528.48 514.00 561.33 514.00 C594.19 514.00 594.19 514.00 627.04 514.00 C659.90 514.00 680.94 514.00 692.76 514.00 C746.65 633.96 704.57 686.54 758.47 806.50 C770.28 806.50 791.32 806.50 824.18 806.50 C857.03 806.50 857.03 806.50 889.89 806.50 C922.74 806.50 922.74 806.50 955.60 806.50" fill="none" stroke="#12ace3" stroke-width="3"/><circle cx="364.20" cy="514.00" r="6.4" fill="#3b51a9"/><circle cx="429.91" cy="514.00" r="6.4" fill="#3b51a9"/><circle cx="495.62" cy="514.00" r="6.4" fill="#3b51a9"/><circle cx="561.33" cy="514.00" r="6.4" fill="#3b51a9"/><circle cx="627.04" cy="514.00" r="6.4" fill="#3b51a9"/><circle cx="692.76" cy="514.00" r="6.4" fill="#3b51a9"/><circle cx="758.47" cy="806.50" r="6.4" fill="#f95c5c"/><circle cx="824.18" cy="806.50" r="6.4" fill="#f95c5c"/><circle cx="889.89" cy="806.50" r="6.4" fill="#f95c5c"/><circle cx="955.60" cy="806.50" r="6.4" fill="#f95c5c"/><g transform="translate(363.20 823.0) rotate(-34)"><text x="0" y="4.0" text-anchor="end" font-size="12" fill="#666">Jan 2024</text><text x="0" y="18.4" text-anchor="end" font-size="12" fill="#666">CAREPLUS</text></g><g transform="translate(428.91 823.0) rotate(-34)"><text x="0" y="4.0" text-anchor="end" font-size="12" fill="#666">Feb 2024</text><text x="0" y="18.4" text-anchor="end" font-size="12" fill="#666">CAREPLUS</text></g><g transform="translate(494.62 823.0) rotate(-34)"><text x="0" y="4.0" text-anchor="end" font-size="12" fill="#666">Mar 2024</text><text x="0" y="18.4" text-anchor="end" font-size="12" fill="#666">CAREPLUS</text></g><g transform="translate(560.33 823.0) rotate(-34)"><text x="0" y="4.0" text-anchor="end" font-size="12" fill="#666">Apr 2024</text><text x="0" y="18.4" text-anchor="end" font-size="12" fill="#666">CAREPLUS</text></g><g transform="translate(626.04 823.0) rotate(-34)"><text x="0" y="4.0" text-anchor="end" font-size="12" fill="#666">May 2024</text><text x="0" y="18.4" text-anchor="end" font-size="12" fill="#666">CAREPLUS</text></g><g transform="translate(691.76 823.0) rotate(-34)"><text x="0" y="4.0" text-anchor="end" font-size="12" fill="#666">Jun 2024</text><text x="0" y="18.4" text-anchor="end" font-size="12" fill="#666">CAREPLUS</text></g><g transform="translate(757.47 823.0) rotate(-34)"><text x="0" y="4.0" text-anchor="end" font-size="12" fill="#666">Jul 2024</text></g><g transform="translate(823.18 823.0) rotate(-34)"><text x="0" y="4.0" text-anchor="end" font-size="12" fill="#666">Aug 2024</text></g><g transform="translate(888.89 823.0) rotate(-34)"><text x="0" y="4.0" text-anchor="end" font-size="12" fill="#666">Sep 2024</text></g><g transform="translate(954.60 823.0) rotate(-34)"><text x="0" y="4.0" text-anchor="end" font-size="12" fill="#666">Oct 2024</text></g><text x="645" y="494.9" font-size="12.5" fill="#3ea5ef" stroke="#3ea5ef" stroke-width="0.3" transform="translate(645 0) scale(0.875 1) translate(-645 0)">MEMBERSHIP</text><rect x="964.5" y="683.2" width="42.8" height="14.5" fill="#12ace3"/><text x="1012.4" y="693.8" font-size="12" fill="#666" transform="translate(1012.4 0) scale(0.94 1) translate(-1012.4 0)">Status</text><line x1="1078.5" y1="517.5" x2="1714.0" y2="517.5" stroke="#dedede" stroke-width="1"/><line x1="1078.5" y1="584.5" x2="1714.0" y2="584.5" stroke="#dedede" stroke-width="1"/><line x1="1078.5" y1="651.5" x2="1714.0" y2="651.5" stroke="#dedede" stroke-width="1"/><line x1="1078.5" y1="718.5" x2="1714.0" y2="718.5" stroke="#dedede" stroke-width="1"/><line x1="1078.5" y1="786.5" x2="1714.0" y2="786.5" stroke="#dedede" stroke-width="1"/><line x1="1078.5" y1="853.5" x2="1714.0" y2="853.5" stroke="#c4c4c4" stroke-width="1"/><line x1="1086.5" y1="517.0" x2="1086.5" y2="861.5" stroke="#c4c4c4" stroke-width="1"/><line x1="1156.5" y1="517.0" x2="1156.5" y2="861.5" stroke="#dedede" stroke-width="1"/><line x1="1225.5" y1="517.0" x2="1225.5" y2="861.5" stroke="#dedede" stroke-width="1"/><line x1="1295.5" y1="517.0" x2="1295.5" y2="861.5" stroke="#dedede" stroke-width="1"/><line x1="1365.5" y1="517.0" x2="1365.5" y2="861.5" stroke="#dedede" stroke-width="1"/><line x1="1434.5" y1="517.0" x2="1434.5" y2="861.5" stroke="#dedede" stroke-width="1"/><line x1="1504.5" y1="517.0" x2="1504.5" y2="861.5" stroke="#dedede" stroke-width="1"/><line x1="1574.5" y1="517.0" x2="1574.5" y2="861.5" stroke="#dedede" stroke-width="1"/><line x1="1643.5" y1="517.0" x2="1643.5" y2="861.5" stroke="#dedede" stroke-width="1"/><line x1="1713.5" y1="517.0" x2="1713.5" y2="861.5" stroke="#dedede" stroke-width="1"/><text x="1075.2" y="521.30" text-anchor="end" font-size="12" fill="#666">2.5</text><text x="1075.2" y="588.30" text-anchor="end" font-size="12" fill="#666">2.0</text><text x="1075.2" y="655.30" text-anchor="end" font-size="12" fill="#666">1.5</text><text x="1075.2" y="722.30" text-anchor="end" font-size="12" fill="#666">1.0</text><text x="1075.2" y="790.30" text-anchor="end" font-size="12" fill="#666">0.5</text><text x="1075.2" y="857.30" text-anchor="end" font-size="12" fill="#666">0</text><text x="1086.40" y="874.9" text-anchor="middle" font-size="12" fill="#666">Jan 2024</text><text x="1156.07" y="874.9" text-anchor="middle" font-size="12" fill="#666">Feb 2024</text><text x="1225.73" y="874.9" text-anchor="middle" font-size="12" fill="#666">Mar 2024</text><text x="1295.40" y="874.9" text-anchor="middle" font-size="12" fill="#666">Apr 2024</text><text x="1365.07" y="874.9" text-anchor="middle" font-size="12" fill="#666">May 2024</text><text x="1434.73" y="874.9" text-anchor="middle" font-size="12" fill="#666">Jun 2024</text><text x="1504.40" y="874.9" text-anchor="middle" font-size="12" fill="#666">Jul 2024</text><text x="1574.07" y="874.9" text-anchor="middle" font-size="12" fill="#666">Aug 2024</text><text x="1643.73" y="874.9" text-anchor="middle" font-size="12" fill="#666">Sep 2024</text><text x="1713.40" y="874.9" text-anchor="middle" font-size="12" fill="#666">Oct 2024</text><path d="M1086.40 549.56 C1121.23 549.56 1121.23 549.56 1156.07 549.56 C1190.90 549.56 1190.90 549.56 1225.73 549.56 C1260.57 549.56 1260.57 549.56 1295.40 549.56 C1330.23 549.56 1330.23 549.56 1365.07 549.56 C1399.90 549.56 1422.00 521.81 1434.73 549.56 C1491.67 673.68 1447.46 729.18 1504.40 853.30 C1517.13 853.30 1539.23 853.30 1574.07 853.30 C1608.90 853.30 1608.90 853.30 1643.73 853.30 C1678.57 853.30 1678.57 853.30 1713.40 853.30" fill="none" stroke="#12ace3" stroke-width="3"/><circle cx="1086.40" cy="549.56" r="6.4" fill="#12ace3"/><circle cx="1156.07" cy="549.56" r="6.4" fill="#12ace3"/><circle cx="1225.73" cy="549.56" r="6.4" fill="#12ace3"/><circle cx="1295.40" cy="549.56" r="6.4" fill="#12ace3"/><circle cx="1365.07" cy="549.56" r="6.4" fill="#12ace3"/><circle cx="1434.73" cy="549.56" r="6.4" fill="#12ace3"/><circle cx="1504.40" cy="853.30" r="6.4" fill="#12ace3"/><circle cx="1574.07" cy="853.30" r="6.4" fill="#12ace3"/><circle cx="1643.73" cy="853.30" r="6.4" fill="#12ace3"/><circle cx="1713.40" cy="853.30" r="6.4" fill="#12ace3"/><text x="1417.9" y="497.9" font-size="12.5" fill="#3ea5ef" stroke="#3ea5ef" stroke-width="0.3" transform="translate(1417.9 0) scale(0.94 1) translate(-1417.9 0)">MRA</text><rect x="1721.4" y="685.4" width="42.1" height="15" fill="#12ace3"/><text x="1768" y="696.5" font-size="12" fill="#666">MRA</text></svg>
</body></html>
